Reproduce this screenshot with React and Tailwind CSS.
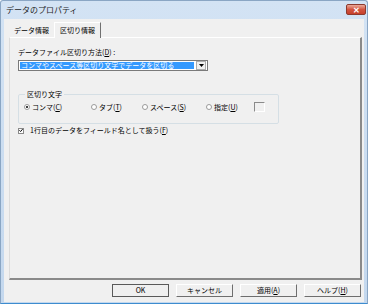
export default function App() {
    const radios = [
        { label: "コンマ(", key: "C", checked: true, w: "w-[67px]" },
        { label: "タブ(", key: "T", checked: false, w: "w-[51px]" },
        { label: "スペース(", key: "S", checked: false, w: "w-[64px]" },
        { label: "指定(", key: "U", checked: false, w: "w-[48px]" },
    ];

    const buttons = [
        { label: "OK", def: true },
        { label: "キャンセル" },
        { label: "適用(", key: "A" },
        { label: "ヘルプ(", key: "H" },
    ];

    return (
        <div className="w-[371px] h-[308px] bg-white font-['Noto_Sans_CJK_JP','Noto_Sans',sans-serif] text-black leading-none">
            <div className="w-[368px] h-[304px] flex flex-col bg-gradient-to-b from-[#d3e3f4] to-[#c4d8ee] border border-[#8aa6c4] border-b-[#3d8ccf] rounded-t-[3px]">
                {/* title bar */}
                <div className="h-[18px] flex items-center justify-between pl-[5px] pr-[1px]">
                    <span className="text-[8px] text-[#1e1e1e]">データのプロパティ</span>
                    <div className="w-[20px] h-[11px] mb-[1px] rounded-[2px] border border-[#8d3a2e] bg-gradient-to-b from-[#e9a99a] via-[#d25440] to-[#c7402b] flex items-center justify-center">
                        <span className="text-[8px] font-bold text-white leading-none">✕</span>
                    </div>
                </div>

                {/* client */}
                <div className="flex-1 mx-[3px] mb-[1px] bg-[#f0f0f0] flex flex-col pl-[5px] pr-[2px] pt-[1px]">
                    {/* tabs */}
                    <div className="flex items-end h-[17px] pl-[1px]">
                        <div className="h-[14px] pl-[4px] pr-[5px] flex items-center text-[7px]">データ情報</div>
                        <div className="h-[16px] px-[5px] flex items-center text-[7px] bg-[#f0f0f0] border-t border-l border-white border-r border-r-[#707070] -mb-px relative">区切り情報</div>
                    </div>

                    {/* panel */}
                    <div className="h-[243px] border-t border-l border-t-white border-l-[#dcdcdc] border-r-2 border-b-2 border-r-[#8a8a8a] border-b-[#8a8a8a] pl-[8px] pt-[10px] flex flex-col">
                        <div className="text-[7px] h-[9px] flex items-center">データファイル区切り方法(<span className="underline">D</span>) :</div>
                        <div className="mt-[3px] w-[190px] h-[11px] bg-white border border-[#7a7a7a] flex items-center p-px">
                            <div className="flex-1 h-full bg-[#3399ff] text-white text-[7px] flex items-center pl-px">コンマやスペース等区切り文字でデータを区切る</div>
                            <div className="w-[10px] h-[9px] ml-[2px] border border-[#adadad] bg-[#f0f0f0] flex items-center justify-center">
                                <svg width="5" height="3" viewBox="0 0 5 3"><path d="M0 0h5L2.5 3z" fill="#000" /></svg>
                            </div>
                        </div>

                        {/* group */}
                        <fieldset className="mt-[20px] w-[261px] h-[33px] border border-[#d5dfe5] rounded-[2px] pl-[5px] pr-0 pt-0 pb-0 m-0">
                            <legend className="text-[7px] px-[2px] ml-[1px] leading-none">区切り文字</legend>
                            <div className="flex items-center mt-[4px]">
                                {radios.map((r) => (
                                    <div key={r.key} className={`flex items-center ${r.w} text-[7px]`}>
                                        <div className="w-[6px] h-[6px] rounded-full border border-[#9a9a9a] bg-white flex items-center justify-center mr-[2px]">
                                            {r.checked && <div className="w-[2px] h-[2px] rounded-full bg-black" />}
                                        </div>
                                        <span>{r.label}<span className="underline">{r.key}</span>)</span>
                                    </div>
                                ))}
                                <div className="w-[11px] h-[10px] border-t border-l border-t-[#8a8a8a] border-l-[#8a8a8a] border-r border-b border-r-white border-b-white bg-[#f0f0f0]" />
                            </div>
                        </fieldset>

                        <div className="mt-[3px] flex items-center text-[7px]">
                            <div className="w-[6px] h-[6px] border border-[#8a8a8a] bg-white flex items-center justify-center mr-[6px]">
                                <svg width="5" height="5" viewBox="0 0 5 5"><path d="M0.5 2.2L2 3.8 4.5 0.8" stroke="#000" strokeWidth="1.2" fill="none" /></svg>
                            </div>
                            <span>1行目のデータをフィールド名として扱う(<span className="underline">F</span>)</span>
                        </div>
                    </div>

                    {/* buttons */}
                    <div className="flex justify-end gap-[7px] mt-[4px] pr-[1px]">
                        {buttons.map((b) => (
                            <div key={b.label} className={`w-[57px] h-[13px] flex items-center justify-center text-[7px] bg-[#f0f0f0] border ${b.def ? "border-[#5a5a5a]" : "border-t-white border-l-white border-r-[#6e6e6e] border-b-[#6e6e6e]"}`}>
                                <span>{b.label}{b.key && <><span className="underline">{b.key}</span>)</>}</span>
                            </div>
                        ))}
                    </div>
                </div>
            </div>
        </div>
    );
}
